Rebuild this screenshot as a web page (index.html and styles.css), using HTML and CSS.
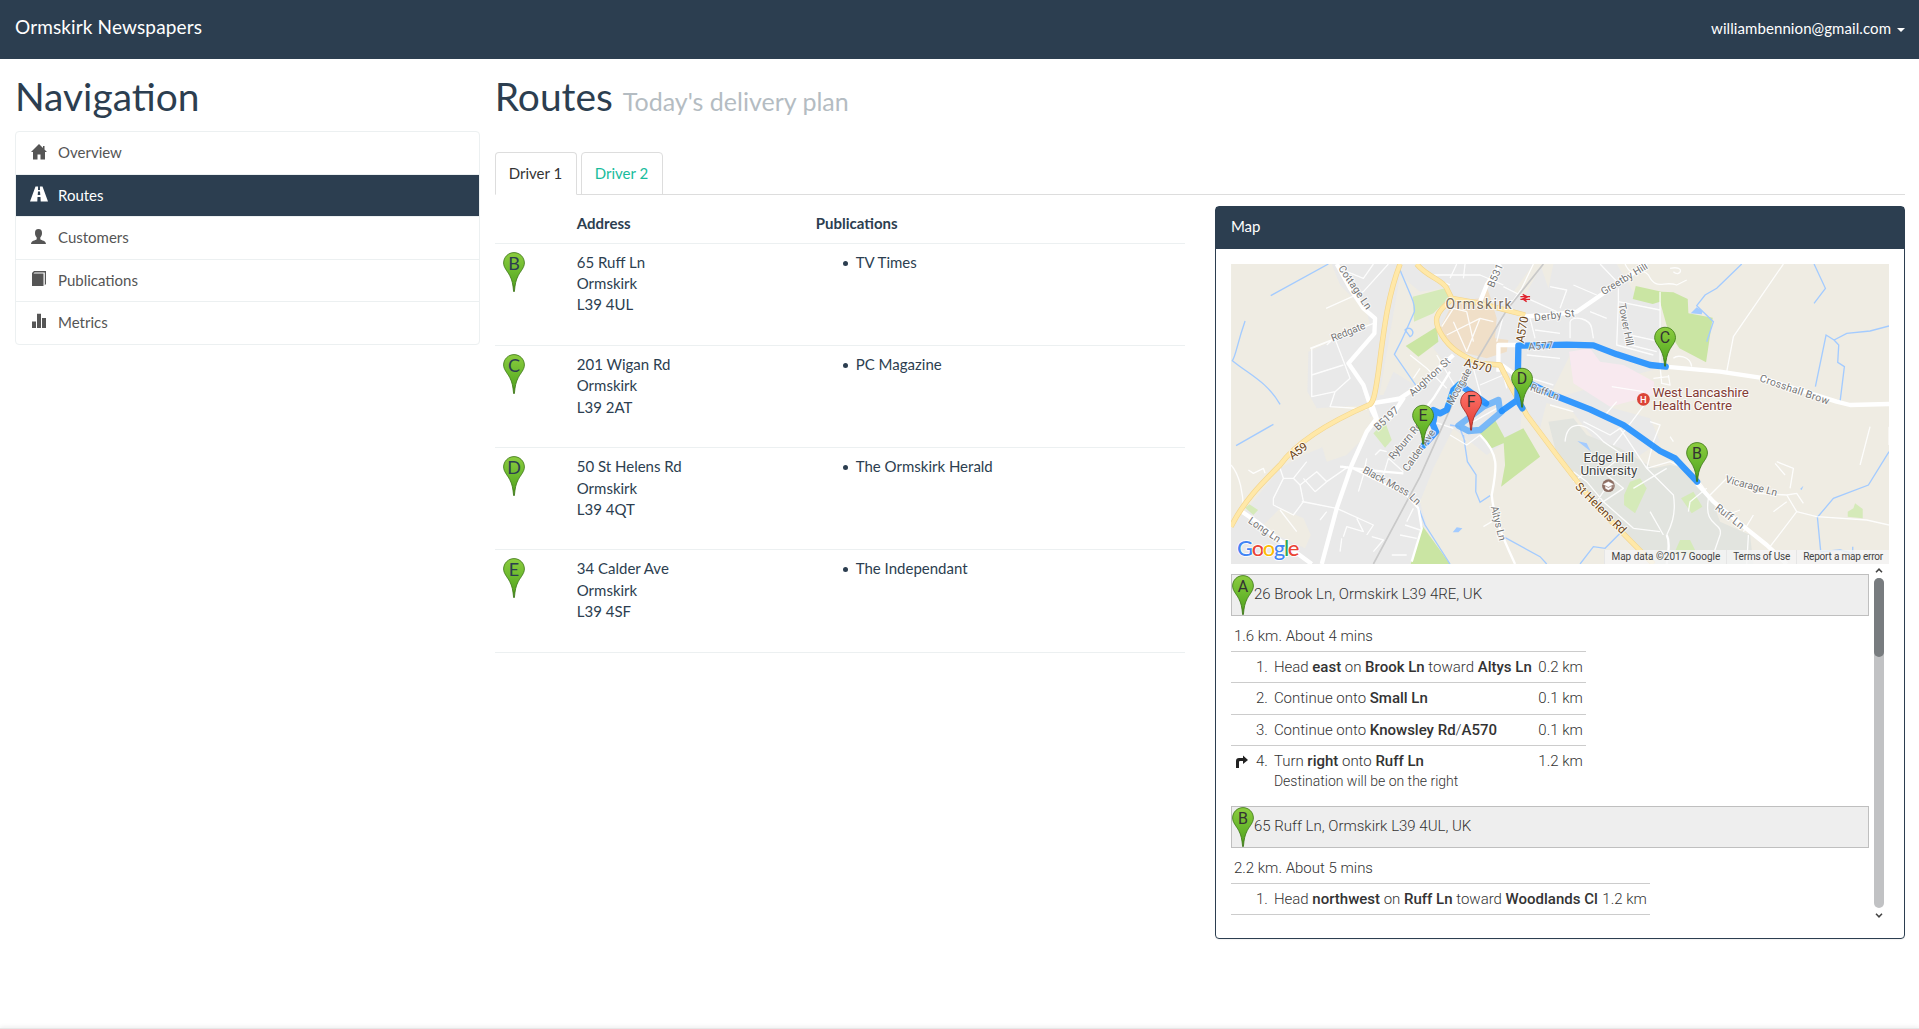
FILE: index.html
```html
<!DOCTYPE html>
<html lang="en">
<head>
<meta charset="utf-8">
<title>Ormskirk Newspapers - Routes</title>
<link rel="stylesheet" href="styles.css">
</head>
<body>
<svg class="defs" width="0" height="0" aria-hidden="true">
  <defs>
    <linearGradient id="green" x1="0" y1="0" x2="0" y2="1"><stop offset="0" stop-color="#8ccc3f"/><stop offset=".5" stop-color="#6ab82d"/><stop offset=".8" stop-color="#5aa824"/><stop offset="1" stop-color="#3f8a14"/></linearGradient>
    <linearGradient id="red" x1="0" y1="0" x2="0" y2="1"><stop offset="0" stop-color="#ff7168"/><stop offset="1" stop-color="#e03c33"/></linearGradient>
    <path id="pin" d="M11 .6C5.2.6.6 5.2.6 11 .6 15.500 4.300 19 6.700 23.500 9.200 28 10 33 10.600 39.500h.8C12 33 12.800 28 15.300 23.500 17.700 19 21.400 15.500 21.400 11 21.400 5.200 16.800.6 11 .6z"/>
  </defs>
</svg>

<header class="navbar">
  <a class="brand">Ormskirk Newspapers</a>
  <a class="user">williambennion@gmail.com <span class="caret"></span></a>
</header>

<div class="page">
  <aside class="sidebar">
    <h1>Navigation</h1>
    <nav class="list">
      <a class="item"><svg class="icon" viewBox="0 0 16 16"><path d="M8 0 0 8h2v7.500h4.500V10.500h3v5H14V8h2l-2.500-2.500V2h-1.500v2z"/></svg>Overview</a>
      <a class="item active"><svg class="icon" viewBox="0 0 16 16"><path d="M4.500.5h2.600L7 4h2L8.900.5h2.600L17 15.500H9.700L9.500 11h-3l-.2 4.500H-1zM7 5.500 6.700 9h2.600L9 5.500z"/></svg>Routes</a>
      <a class="item"><svg class="icon" viewBox="0 0 16 16"><path d="M7.500 0C5 0 4 1.600 4 4c0 2 .6 3.400 1.700 4.500v1.700C4.500 11.500 0 11.500 0 15h15c0-3.500-4.500-3.500-5.700-4.800V8.500C10.400 7.400 11 6 11 4c0-2.400-1-4-3.500-4z"/></svg>Customers</a>
      <a class="item"><svg class="icon" viewBox="0 0 16 16"><path d="M3 0h12v13l-1.200 1.200V1.500H3.500L2.500 2.500H12.500V15H1V2z"/></svg>Publications</a>
      <a class="item"><svg class="icon" viewBox="0 0 16 16"><path d="M1 8.500h4V15H1zM6 .8h4V15H6zM11 5h4v10h-4z"/></svg>Metrics</a>
    </nav>
  </aside>

  <main class="main">
    <h1>Routes <small>Today's delivery plan</small></h1>
    <div class="tabs"><a class="tab current">Driver 1</a><a class="tab">Driver 2</a></div>
    <div class="columns">
      <table class="stops">
        <thead><tr><th class="c-pin"></th><th class="c-addr">Address</th><th>Publications</th></tr></thead>
        <tbody>
          <tr><td><svg class="pin" viewBox="0 0 22 40"><use href="#pin"/><text x="11" y="17.800">B</text></svg></td><td><address>65 Ruff Ln<br>Ormskirk<br>L39 4UL</address></td><td><ul><li>TV Times</li></ul></td></tr>
          <tr><td><svg class="pin" viewBox="0 0 22 40"><use href="#pin"/><text x="11" y="17.800">C</text></svg></td><td><address>201 Wigan Rd<br>Ormskirk<br>L39 2AT</address></td><td><ul><li>PC Magazine</li></ul></td></tr>
          <tr><td><svg class="pin" viewBox="0 0 22 40"><use href="#pin"/><text x="11" y="17.800">D</text></svg></td><td><address>50 St Helens Rd<br>Ormskirk<br>L39 4QT</address></td><td><ul><li>The Ormskirk Herald</li></ul></td></tr>
          <tr><td><svg class="pin" viewBox="0 0 22 40"><use href="#pin"/><text x="11" y="17.800">E</text></svg></td><td><address>34 Calder Ave<br>Ormskirk<br>L39 4SF</address></td><td><ul><li>The Independant</li></ul></td></tr>
        </tbody>
      </table>

      <section class="panel">
        <div class="panel-head">Map</div>
        <div class="panel-body">
          <div class="mapbox">
          <svg class="map" viewBox="33 27 1974 900">
            <rect class="land" x="33" y="27" width="1974" height="900"/>
            <!-- built-up areas -->
            <g class="urban">
              <path d="M335 27H960L985 100 1000 27H1190L1240 110 1320 120 1330 320 1300 345 1240 360 1050 330 1050 300 980 440 960 520 905 470 900 530 800 600 700 520 640 640 600 740 620 810 570 927H33V820L180 640 250 600 300 580 450 490 445 450 290 460 262 410 265 290 330 262 450 210 440 170 360 90z"/>
              <path d="M960 440 1110 400 1180 460 1290 490 1320 560 1230 620 1130 560 1080 500 1050 460z"/>
            </g>
            <g class="land">
              <path d="M540 60 600 110 680 100 650 220 640 280 680 330 600 400 520 350 490 420 478 420z"/>
              <path d="M300 555 430 495 465 480 440 540 380 600 320 620z"/>
              <path d="M130 810 180 760 250 790 272 840 255 880 150 830z"/>
              <path d="M960 40 910 130 880 110 940 27H1000z"/>
            </g>
            <path class="campus" d="M985 500 1060 490 1100 540 1200 580 1300 640 1350 630 1400 640 1470 720 1500 800 1590 840 1600 927H1300L1130 760 1010 600z"/>
            <path class="centre" d="M660 220 700 140 780 130 800 95 812 130 830 190 825 250 865 255 860 290 800 310 720 290 680 250z"/>
            <path class="health" d="M1047 290 1110 280 1140 320 1210 330 1302 380 1300 420 1170 455 1060 385z"/>
            <g class="park">
              <path d="M1238 132 1247 93 1325 110 1360 112 1403 132 1405 175 1478 188 1458 322 1378 280 1345 230 1320 140 1298 147z"/>
              <path d="M557 273 650 215 655 260 595 305z"/>
              <path d="M780 535 825 495 860 560 815 580zM850 550 910 520 960 605 843 695 855 630z"/>
              <path d="M572 927 605 810 690 927z"/>
            </g>
            <g class="park2">
              <path d="M578 125 680 98 685 130 640 175 582 200z"/>
              <path d="M460 535 495 500 515 555 495 578zM75 758 88 748 114 765 100 780z"/>
              <path d="M1212 720 1230 680 1260 670 1280 700 1245 775 1212 750zM1383 730 1420 710 1447 755 1415 775zM1360 900 1380 855 1410 855 1425 885 1415 900zM1883 785V770L1900 760 1905 745 1928 762V790z"/>
            </g>
            <!-- rivers and ponds -->
            <g class="water">
              <path d="M152 122 325 27M75 198C50 270 48 300 37 317C90 360 140 380 180 448M540 45C570 120 585 140 583 170C560 220 555 240 523 298L590 395M48 572 160 508M595 757 615 810 690 927M730 540 742 620 768 660 767 710 780 742 810 722M690 510 718 515 735 560M850 845 960 905 980 927M1565 27 1490 100 1455 120 1430 152 1480 200 1460 260M1782 27 1816 100 1782 145M1786 395 1818 240 1842 255 1880 235 1950 228 2007 213M1842 255 1856 270 1853 322 1873 335 1860 440M2007 590 1945 690 1840 730 1792 787 1802 890 1860 885 1898 895V875M1080 927 1120 875 1155 880 1215 820"/>
              <path d="M555 225a13 13 0 1 1 15 20z"/>
              <path class="fill" d="M1412 175 1430 157 1448 168 1445 178zM1072 558 1113 590 1105 575 1100 565zM698 832 710 817 727 820 715 832zM1740 702 1750 692 1745 705z"/>
            </g>
            <!-- residential streets -->
            <g class="minor">
              <path d="M318 160 430 110 505 27M380 50 430 70 460 27M275 280 345 252 390 370 345 410 275 425zM275 360 370 330M320 270 333 258M345 410 330 455 440 462M33 630C60 660 70 720 70 765M270 280 460 205M85 645 100 655 130 640 135 655M180 640 190 670 160 730 160 750 220 780 250 740 240 690 220 670 190 670M220 670 260 620M240 690 290 650 320 680 285 710 250 670M320 680 385 635M245 740 350 760 460 810 440 840M250 740 350 760M300 795 320 770M180 765 230 830M370 845 380 815 430 830 410 790 M360 890 365 850M455 845 490 855 460 890M540 840 590 850M555 810 600 825M515 900 560 900M490 660 505 610 550 650M465 600 480 585 500 590M415 710 430 660 440 610M560 800 580 760"/>
              <path d="M590 27 620 60 690 90M620 60 780 60 850 90M690 70 710 27M730 70 735 27M850 95 900 120 1010 170M940 27 905 100 850 180 830 260M665 215 700 160 740 170M680 240 780 190 820 200M700 200 740 290M740 170 760 260M780 190 740 290M650 300 720 420M570 300 620 340 680 400M600 340 580 370M945 225 1020 235M930 190 945 250M920 300 1020 310M870 350 1000 390M760 340 790 450M780 390 850 360 860 400M690 540 740 570 780 540M760 500 830 460M640 500 700 520"/>
              <path d="M990 95 1040 105 1020 160M1060 90 1130 120M1140 27 1200 90M1195 100 1195 140 1320 165M1195 140 1190 270 1300 300M1320 110V330M1230 240 1320 260M1230 240V270L1310 290M1110 170 1160 190M1050 200C1060 180 1110 190 1115 220L1120 250M1050 200V250M1215 27C1240 80 1260 30 1285 60C1310 110 1330 75 1370 90L1400 75M1350 40C1400 30 1380 70 1360 50M1360 310C1370 300 1410 300 1415 335M1320 335 1325 385 1350 390 1345 360M1300 370 1345 365M1175 395 1270 410M1690 27 1540 245 1520 350M990 450 1060 470M1155 480 1190 440M1180 570 1235 500 1280 440"/>
              <path d="M1035 560C1040 500 1090 490 1150 560L1210 600 1160 640M1090 500 1170 540 1200 520 1280 640 1350 620C1420 650 1460 700 1465 730M1060 650 1100 680 1150 740 1240 820M1100 650 1060 680M1170 680 1130 740M1240 700 1340 640M1280 640 1360 720C1370 780 1350 820 1340 840M1240 820 1320 830M1290 770 1330 840M1150 740 1210 700 1160 660M1465 730C1450 820 1510 800 1500 840L1470 927M1405 770 1410 740 1460 700M1290 500 1320 510 1300 560 1280 640M1350 545 1360 560M1950 515 1920 630M2007 570V515"/>
              <path d="M1470 720 1520 670 1610 715 1700 720 1730 770 1650 875M1730 770 1790 785 1940 795 2007 810M1670 620 1720 640 1710 700M1695 660 1665 625M1660 770 1700 740M1520 780 1560 765M1570 830 1600 780M1580 927 1585 840M1700 720 1730 715 1750 745M790 815 815 800"/>
            </g>
            <g class="street">
              <path d="M350 27 390 100 430 160 465 190 463 235 385 325 430 390 455 465 470 495"/>
              <path d="M305 927 350 760 395 630 440 530 470 490 455 445 540 430 600 390 650 345 700 300M455 445 550 430 510 490"/>
              <path d="M66 770 110 800 170 850 275 927M780 140 800 90 840 27M835 350V270H890M905 185 990 180 1070 170 1200 80 1280 27M1335 335 1500 350 1620 368 1850 440 1890 450 2007 447M1430 685 1480 740 1590 830 1640 870 1700 927M845 330 900 370 1000 420"/>
              <path class="thin" d="M690 350 640 430 600 480M780 540C840 600 830 640 815 720C820 780 840 830 885 927M550 655 490 650 360 635M365 635 400 640 560 720 595 760 605 820 575 920M1340 840C1350 860 1345 890 1340 927"/>
            </g>
            <path class="rail" d="M460 927 600 665 700 440 750 350 860 165 970 27"/>
            <!-- classified roads -->
            <g class="road-edge"><path d="M540 27C500 130 490 240 475 350C465 420 460 440 450 448C330 500 230 560 180 630C120 690 70 740 33 815M590 27C620 65 670 75 680 100L695 130 780 145 915 180M700 130C640 175 640 200 665 240C690 280 720 300 780 325L840 330 870 390 920 480 1010 600 1130 755 1300 927"/></g>
            <g class="road"><path d="M540 27C500 130 490 240 475 350C465 420 460 440 450 448C330 500 230 560 180 630C120 690 70 740 33 815M590 27C620 65 670 75 680 100L695 130 780 145 915 180M700 130C640 175 640 200 665 240C690 280 720 300 780 325L840 330 870 390 920 480 1010 600 1130 755 1300 927"/></g>
            <!-- delivery route -->
            <path class="route light" d="M840 470 835 435 790 455 715 512 745 528 780 525 845 470"/>
            <path class="route" d="M1431 680 1365 610 1320 588 1210 510 1110 463 1000 420 935 388 905 375M1337 335 1290 330 1190 298 1120 271 1040 269 895 272 892 435 907 460M892 435 845 468M798 445 718 388 700 405 680 465 660 475 640 465M635 500 648 530 610 572M645 470 640 500"/>
            <g class="label">
              <text transform="translate(354 40) rotate(56)" textLength="152">Cottage Ln</text>
              <text transform="translate(338 260) rotate(-22)" textLength="108">Redgate</text>
              <text transform="translate(820 100) rotate(-66)" textLength="74">B531</text>
              <text x="943" y="199" textLength="122" transform="rotate(-7 943 199)">Derby St</text>
              <text transform="translate(1150 121) rotate(-31)" textLength="158">Greetby Hill</text>
              <text transform="translate(1195 148) rotate(79)" textLength="128">Tower Hill</text>
              <text transform="translate(578 425) rotate(-42)" textLength="155">Aughton St</text>
              <text transform="translate(697 452) rotate(-61)" textLength="120">Moorgate</text>
              <text transform="translate(925 286) rotate(-4)" textLength="75">A577</text>
              <text transform="translate(928 405) rotate(20)" textLength="90">Ruff Ln</text>
              <text transform="translate(1617 378) rotate(19)" textLength="218">Crosshall Brow</text>
              <text transform="translate(474 528) rotate(-43)" textLength="88">B5197</text>
              <text transform="translate(520 616) rotate(-50)" textLength="136">Ryburn Rd</text>
              <text transform="translate(563 652) rotate(-55)" textLength="146">Calder Ave</text>
              <text transform="translate(426 652) rotate(28)" textLength="153">Black Moss</text><text transform="translate(566 728) rotate(45)">Ln</text>
              <text transform="translate(82 802) rotate(34)" textLength="110">Long Ln</text>
              <text transform="translate(812 756) rotate(76)" textLength="106">Altys Ln</text>
              <text transform="translate(1514 682) rotate(15)" textLength="160">Vicarage Ln</text>
              <text transform="translate(1483 762) rotate(38)" textLength="100">Ruff Ln</text>
            </g>
            <g class="label major">
              <text transform="translate(730 333) rotate(14)" textLength="84">A570</text>
              <text transform="translate(911 265) rotate(-80)" textLength="80">A570</text>
              <text transform="translate(217 615) rotate(-37)" textLength="60">A59</text>
              <text transform="translate(1063 697) rotate(45)" textLength="200">St Helens Rd</text>
            </g>
            <text class="town" x="676" y="163" textLength="199">Ormskirk</text>
            <g class="station"><path d="M901 125h29M901 133h29M908 118l14 8-14 6 12 8"/></g>
            <g class="place"><text x="1298" y="426" textLength="288">West Lancashire</text><text x="1298" y="465" textLength="238">Health Centre</text></g>
            <circle cx="1270" cy="433" r="19" fill="#db4437"/><text class="hospital" x="1270" y="443">H</text>
            <g class="place uni"><text x="1090" y="621" textLength="152">Edge Hill</text><text x="1081" y="660" textLength="171">University</text></g>
            <circle cx="1165" cy="692" r="19" fill="#8d6e63"/><path d="m1150 688 15-8 15 8-15 8zM1156 694v6l9 5 9-5v-6l-9 5zM1179 689v10" fill="#fff" stroke="#fff"/>
            <g class="mappin">
              <g transform="translate(1302 215) scale(3)"><use href="#pin"/><text x="11" y="16.800">C</text></g>
              <g transform="translate(873 338) scale(3)"><use href="#pin"/><text x="11" y="16.800">D</text></g>
              <g transform="translate(1398 561) scale(3)"><use href="#pin"/><text x="11" y="16.800">B</text></g>
              <g transform="translate(576 449) scale(3)"><use href="#pin"/><text x="11" y="16.800">E</text></g>
              <g class="end" transform="translate(720 407) scale(3)"><use href="#pin"/><text x="11" y="16.800">F</text></g>
            </g>
            <text class="logo" x="51" y="904" textLength="187"><tspan fill="#4285f4">G</tspan><tspan fill="#ea4335">o</tspan><tspan fill="#fbbc05">o</tspan><tspan fill="#4285f4">g</tspan><tspan fill="#34a853">l</tspan><tspan fill="#ea4335">e</tspan></text>
          </svg>
          <div class="credits"><span>Map data ©2017 Google</span><span>Terms of Use</span><span>Report a map error</span></div>
          </div>

          <div class="scroller">
            <div class="directions">
              <div class="place-box"><svg class="pin" viewBox="0 0 22 40"><use href="#pin"/><text x="11" y="17.300">A</text></svg>26 Brook Ln, Ormskirk L39 4RE, UK</div>
              <div class="summary">1.6 km. About 4 mins</div>
              <div class="steps first">
                <div class="step"><i></i><span>1.</span><p>Head <b>east</b> on <b>Brook Ln</b> toward <b>Altys Ln</b></p><em>0.2 km</em></div>
                <div class="step"><i></i><span>2.</span><p>Continue onto <b>Small Ln</b></p><em>0.1 km</em></div>
                <div class="step"><i></i><span>3.</span><p>Continue onto <b>Knowsley Rd</b>/<b>A570</b></p><em>0.1 km</em></div>
                <div class="step tall"><i><svg viewBox="0 0 14 14"><path d="M1 13V6q0-3 3-3h4V.5L13 5 8 9V6H5Q4 6 4 7v6z"/></svg></i><span>4.</span><p>Turn <b>right</b> onto <b>Ruff Ln</b><small>Destination will be on the right</small></p><em>1.2 km</em></div>
              </div>
              <div class="place-box"><svg class="pin" viewBox="0 0 22 40"><use href="#pin"/><text x="11" y="17.300">B</text></svg>65 Ruff Ln, Ormskirk L39 4UL, UK</div>
              <div class="summary">2.2 km. About 5 mins</div>
              <div class="steps second">
                <div class="step"><i></i><span>1.</span><p>Head <b>northwest</b> on <b>Ruff Ln</b> toward <b>Woodlands Cl</b></p><em>1.2 km</em></div>
              </div>
            </div>
            <div class="scrollbar">
              <svg viewBox="0 0 8 5"><path d="M1 4.300 4 1.200l3 3.100"/></svg>
              <div class="track"><div class="thumb"></div></div>
              <svg viewBox="0 0 8 5"><path d="M1 .7 4 3.800 7 .7"/></svg>
            </div>
          </div>
        </div>
      </section>
    </div>
  </main>
</div>
<footer class="footer"></footer>
</body>
</html>
```
FILE: styles.css
```css
* { box-sizing: border-box; }
body { margin: 0; height: 1029px; overflow: hidden; display: flex; flex-direction: column; background: #fff; color: #2c3e50; font: 15px/1.42857 Lato, sans-serif; }
.defs { position: absolute; }
.navbar { height: 59px; flex: none; padding: 0 14px 0 15px; display: flex; justify-content: space-between; background: #2c3e50; color: #fff; }
.brand { font-size: 19px; line-height: 21px; padding-top: 16px; letter-spacing: .13px; }
.user { padding-top: 18px; letter-spacing: .08px; }
.caret { display: inline-block; margin-left: 2px; vertical-align: middle; border-top: 4px solid; border-left: 4px solid transparent; border-right: 4px solid transparent; }
.page { flex: 1; display: flex; }
.sidebar { width: 479.75px; padding-left: 15px; }
.main { flex: 1; padding: 0 14px 0 15px; }
h1 { margin: 16px 0 13px; font-size: 38.9px; font-weight: 400; line-height: 43px; }
h1 small { font-size: 25px; line-height: 1; color: #b4bcc2; }
.list { border: 1px solid #ecf0f1; border-radius: 4px; }
.item { display: flex; align-items: center; height: 42.4px; padding: 0 15px; color: #555; border-bottom: 1px solid #ecf0f1; }
.item:first-child { height: 43px; }
.item:last-child { height: 41.4px; border-bottom: 0; }
.item.active { background: #2c3e50; background-clip: padding-box; color: #fff; }
.icon { width: 16px; height: 16px; margin: -3px 11px 0 0; fill: currentColor; overflow: visible; }
.tabs { display: flex; gap: 4px; margin: 34px 0 10px; height: 43px; border-bottom: 1px solid #ddd; }
.tab { width: 82px; height: 43px; padding: 10px 13px; border: 1px solid #ddd; border-radius: 4px 4px 0 0; color: #18bc9c; white-space: nowrap; }
.current { border-bottom-color: #fff; color: #333; }
.columns { display: grid; grid-template-columns: 1fr 1fr; gap: 30px; align-items: start; }
.stops { width: 100%; border-collapse: collapse; table-layout: fixed; }
.stops th { height: 38px; padding: 8px; text-align: left; border-bottom: 1px solid #ecf0f1; }
.c-pin { width: 74px; }
.c-addr { width: 239px; }
.stops td { height: 102.3px; padding: 8px; vertical-align: top; border-bottom: 1px solid #ecf0f1; }
address { font-style: normal; }
ul { margin: 0; padding-left: 40px; list-style: none; }
li::before { content: ""; display: inline-block; width: 5px; height: 5px; margin: 0 8px 2px -13px; border-radius: 50%; background: currentColor; }
.pin { display: block; width: 22px; height: 40px; overflow: visible; }
.pin use, .mappin use { fill: url(#green); stroke: #3a7414; stroke-width: .8px; }
.pin text, .mappin text { font: 16px Roboto, sans-serif; fill: #333; text-anchor: middle; }
.stops .pin text { font: 18px Lato, sans-serif; fill: #2c3e50; }
.mappin .end use { fill: url(#red); stroke: #9b2720; }
.panel { margin-top: 1px; border: 1px solid #2c3e50; border-radius: 4px; height: 733px; box-shadow: 0 1px 1px rgba(0,0,0,.05); }
.panel-head { height: 42px; padding: 9px 15px; background: #2c3e50; color: #fff; }
.panel-body { padding: 15px; }
.mapbox { height: 300px; display: grid; }
.map { grid-area: 1/1; width: 100%; height: 300px; font-family: Roboto, sans-serif; }
.credits { grid-area: 1/1; align-self: end; justify-self: end; z-index: 1; height: 14px; display: flex; background: rgba(245,245,245,.8); color: #444; font: 10px/14px Roboto, sans-serif; }
.credits span { padding: 0 6px; border-left: 1px solid #e6e6e6; }
.credits span + span { letter-spacing: -.2px; }
.land { fill: #efece3; }
.urban { fill: #e9e9e9; }
.campus { fill: #e2e4df; }
.centre { fill: #f0dfc8; }
.health { fill: #f8e9ef; }
.park { fill: #cae5a3; }
.park2 { fill: #d5eab9; }
.water { fill: none; stroke: #a3cbff; stroke-width: 4; }
.water .fill { fill: #a3cbff; stroke: none; }
.minor, .street { fill: none; stroke: #fff; stroke-width: 4; stroke-linejoin: round; opacity: .9; }
.street { stroke-width: 13; opacity: 1; }
.street .thin { stroke-width: 7; }
.rail { fill: none; stroke: #c9c9c9; stroke-width: 5; }
.road-edge, .road { fill: none; stroke: #f3d58c; stroke-width: 16; stroke-linejoin: round; }
.road { stroke: #ffe8a8; stroke-width: 12; }
.route { fill: none; stroke: #1a8cff; stroke-opacity: .88; stroke-width: 19; stroke-linejoin: round; stroke-linecap: round; }
.route.light { stroke: #69b0f8; }
.label text, .place text, .town { paint-order: stroke; stroke: #fff; stroke-opacity: .75; stroke-width: 6px; }
.label { font-size: 31px; fill: #757575; }
.label.major { font-size: 35px; fill: #6b4316; }
.town { font-size: 42px; fill: #7a6e60; }
.place { font-size: 40px; fill: #843c35; }
.uni { fill: #444; }
.station { fill: none; stroke: #e0222c; stroke-width: 4; }
.hospital { fill: #fff; font-size: 28px; text-anchor: middle; font-weight: 500; }
.logo { font: 500 66px Lato, sans-serif; paint-order: stroke; stroke: #fff; stroke-width: 5px; }
.scroller { display: flex; height: 360px; overflow: hidden; font-family: Roboto, sans-serif; font-weight: 300; color: #333; }
.directions { width: 638px; padding-top: 10px; }
.place-box { display: flex; align-items: center; height: 42px; background: #eee; border: 1px solid #bfbfbf; }
.summary { height: 35px; padding: 10px 3px 0; }
.steps.first { width: 355px; height: 155px; }
.steps.second { width: 419px; border-bottom: 1px solid #ccc; }
.step { display: flex; height: 31.300px; padding-top: 5px; border-top: 1px solid #ccc; }
.step i { width: 25px; padding: 4px 0 0 4px; }
.step i svg { display: block; width: 14px; height: 14px; fill: #222; }
.step span { width: 18px; }
.step p { margin: 0; flex: 1; white-space: nowrap; }
.step b { font-weight: 500; }
.step small { display: block; font-size: 14px; line-height: 19px; }
.step em { font-style: normal; padding-right: 3px; }
.scrollbar { width: 10px; margin-left: 5px; padding-top: 4px; display: flex; flex-direction: column; align-items: center; }
.scrollbar svg { width: 8px; height: 5px; fill: none; stroke: #444; stroke-width: 1.500; }
.track { width: 10px; height: 330px; margin: 5px 0; border-radius: 5px; background: #c1c2c4; }
.thumb { height: 79px; border-radius: 5px; background: #787c7f; }
.footer { flex: none; height: 1px; background: #e7e7e7; box-shadow: 0 0 4px rgba(0,0,0,.25); }
```
